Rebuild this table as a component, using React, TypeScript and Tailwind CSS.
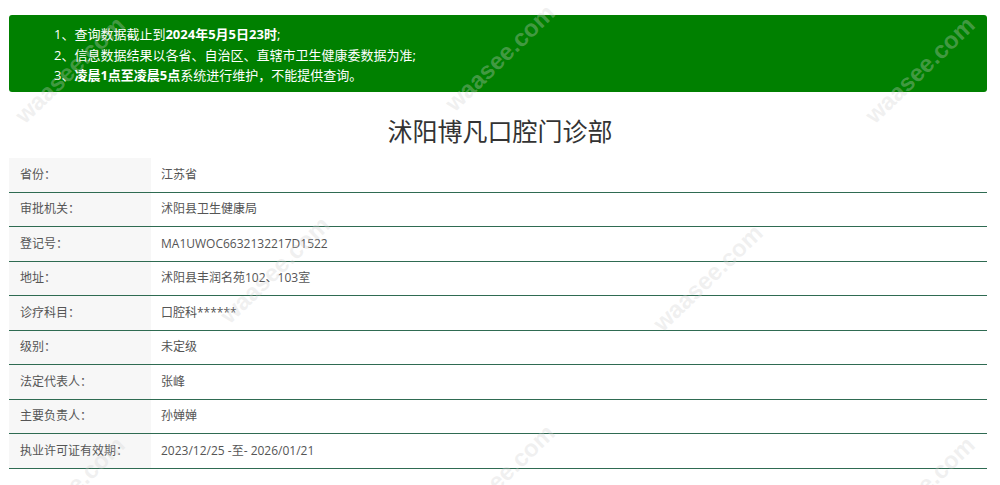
import React from "react";

const rows = [
  { label: "省份：", value: "江苏省" },
  { label: "审批机关：", value: "沭阳县卫生健康局" },
  { label: "登记号：", value: "MA1UWOC6632132217D1522" },
  { label: "地址：", value: "沭阳县丰润名苑102、103室" },
  { label: "诊疗科目：", value: "口腔科******" },
  { label: "级别：", value: "未定级" },
  { label: "法定代表人：", value: "张峰" },
  { label: "主要负责人：", value: "孙婵婵" },
  { label: "执业许可证有效期：", value: "2023/12/25 -至- 2026/01/21" },
];

// watermark centres, tiled like the site's background image
const marks = [
  [70, 70],
  [500, 58],
  [920, 70],
  [275, 270],
  [708, 278],
  [70, 490],
  [500, 478],
  [920, 490],
];

export default function App() {
  return (
    <div className="relative min-h-screen overflow-hidden bg-white font-['Open_Sans','Noto_Sans_CJK_SC',sans-serif]">
      {/* notice box */}
      <div className="mx-[9px] mt-[15px] h-[77px] w-[978px] rounded-[3px] bg-[#008000] pl-[45px] pt-[9px] text-[13px] leading-[20.5px] text-white">
        <p>
          1、查询数据截止到<b>2024年5月5日23时</b>;
        </p>
        <p>2、信息数据结果以各省、自治区、直辖市卫生健康委数据为准;</p>
        <p>
          3、<b>凌晨1点至凌晨5点</b>系统进行维护，不能提供查询。
        </p>
      </div>

      {/* title */}
      <h1 className="mt-[23px] h-[32px] text-center text-[25px] leading-[32px] text-[#333]">
        沭阳博凡口腔门诊部
      </h1>

      {/* info table */}
      <div className="ml-[9px] mt-[11px] w-[978px] text-[12px] text-[#555]">
        {rows.map((r) => (
          <div
            key={r.label}
            className="flex h-[34.5px] items-center border-b border-[#2f6b52]"
          >
            <div className="flex h-full w-[142px] items-center bg-[#f7f7f7] pl-[11px]">
              {r.label}
            </div>
            <div className="pl-[10px]">{r.value}</div>
          </div>
        ))}
      </div>

      {/* watermarks */}
      {marks.map(([x, y], i) => (
        <span
          key={i}
          className="pointer-events-none absolute -translate-x-1/2 -translate-y-1/2 -rotate-[44deg] select-none whitespace-nowrap font-['Liberation_Sans',sans-serif] text-[24px] font-bold text-[rgba(210,210,210,0.32)]"
          style={{ left: x, top: y }}
        >
          waasee.com
        </span>
      ))}
    </div>
  );
}
